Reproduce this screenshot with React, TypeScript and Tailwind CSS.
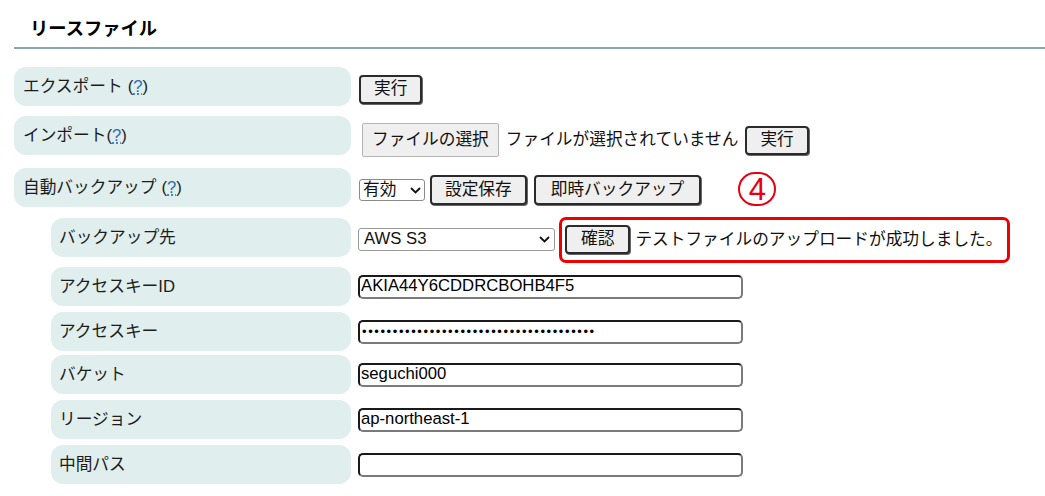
import type { ReactNode } from "react";

const font = "font-['Liberation_Sans','Noto_Sans_CJK_JP',sans-serif]";

function Help({ spaced = true }: { spaced?: boolean }) {
  return (
    <span className={spaced ? "ml-[5px]" : ""}>
      (<span className="text-[#2e6db4] underline decoration-dotted underline-offset-2">?</span>)
    </span>
  );
}

function Chevron() {
  return (
    <svg width="11" height="7" viewBox="0 0 11 7" className="shrink-0">
      <path d="M1 1 L5.5 5.5 L10 1" fill="none" stroke="#111" strokeWidth="1.8" />
    </svg>
  );
}

function Button({ children, className = "" }: { children: ReactNode; className?: string }) {
  return (
    <button
      type="button"
      className={`h-[29px] px-[13px] bg-[#efefef] border-2 border-[#2b2b2b] rounded-[4px] shadow-[1px_1px_0_#666] text-[16.7px] leading-none text-[#111] ${className}`}
    >
      {children}
    </button>
  );
}

const boxBorder =
  "w-[385px] h-[24px] flex items-center bg-white border-2 border-t-[#1a1a1a] border-l-[#1a1a1a] border-r-[#7a7a7a] border-b-[#7a7a7a] rounded-[5px] leading-none text-black overflow-hidden whitespace-nowrap";

function TextBox({ value }: { value: string }) {
  return <div className={`${boxBorder} pl-[1px] text-[16.7px]`}>{value}</div>;
}

interface RowProps {
  label: ReactNode;
  indent?: boolean;
  className: string;
  contentClass?: string;
  children: ReactNode;
}

function Row({ label, indent = false, className, contentClass = "", children }: RowProps) {
  return (
    <div className={`flex h-[39px] ${className}`}>
      <div
        className={`h-full flex items-center bg-[#e0eeee] rounded-[12px] text-[16.7px] text-[#1c1c1c] ${
          indent ? "ml-[37px] w-[300px] pl-[8px]" : "w-[337px] pl-[9px]"
        }`}
      >
        {label}
      </div>
      <div className={`ml-[7px] h-full flex items-center ${contentClass}`}>{children}</div>
    </div>
  );
}

export default function App() {
  return (
    <div className={`w-[1045px] h-[496px] bg-white overflow-hidden ${font}`}>
      <div className="ml-[14px] pl-[16px] pt-[17px] pb-[6px] border-b-2 border-[#85a8a8]">
        <h2 className="text-[18.3px] leading-[24px] font-bold text-black">リースファイル</h2>
      </div>

      <div className="ml-[14px]">
        <Row className="mt-[18px]" contentClass="pt-[5px]" label={<>エクスポート<Help /></>}>
          <Button className="ml-[1px]">実行</Button>
        </Row>

        <Row className="mt-[10px]" contentClass="pt-[9px]" label={<>インポート<Help spaced={false} /></>}>
          <div className="ml-[4px] h-[34px] px-[9px] flex items-center bg-[#efefef] border border-[#b5b5b5] rounded-[2px] text-[16.7px] text-[#111]">
            ファイルの選択
          </div>
          <span className="ml-[7px] text-[16.7px] text-[#111]">ファイルが選択されていません</span>
          <Button className="ml-[7px]">実行</Button>
        </Row>

        <Row className="mt-[13px]" contentClass="pt-[5px]" label={<>自動バックアップ<Help /></>}>
          <div className="ml-[1px] h-[22px] w-[66px] pl-[3px] pr-[3px] flex items-center justify-between bg-white border border-[#8a8a8a] rounded-[3px] text-[16.7px] leading-none text-[#111]">
            <span>有効</span>
            <Chevron />
          </div>
          <Button className="ml-[5px] h-[30px]">設定保存</Button>
          <Button className="ml-[7px] h-[30px] px-[15px]">即時バックアップ</Button>
          <span className="ml-[37px] -mt-[2px] w-[38px] h-[34px] flex items-center justify-center rounded-full border-2 border-[#e60012] text-[31px] leading-none text-[#e60012]">
            4
          </span>
        </Row>

        <Row className="mt-[11px]" indent contentClass="pt-[4px]" label="バックアップ先">
          <div className="h-[23px] w-[197px] pl-[5px] pr-[4px] flex items-center justify-between bg-white border border-[#9a9a9a] rounded-[3px] text-[16.7px] leading-none text-[#111]">
            <span>AWS S3</span>
            <Chevron />
          </div>
          <div className="ml-[4px] h-[46px] pl-[3px] pr-[4px] flex items-center border-[3px] border-[#ee0000] rounded-[7px]">
            <Button className="px-[14px]">確認</Button>
            <span className="ml-[5px] text-[16.7px] text-[#111] whitespace-nowrap">
              テストファイルのアップロードが成功しました。
            </span>
          </div>
        </Row>

        <Row className="mt-[10px]" indent label="アクセスキーID">
          <TextBox value="AKIA44Y6CDDRCBOHB4F5" />
        </Row>

        <Row className="mt-[6px]" indent label="アクセスキー">
          <div className={`${boxBorder} pl-[2px] text-[13px] tracking-[1.6px]`}>{"•".repeat(38)}</div>
        </Row>

        <Row className="mt-[4px]" indent label="バケット">
          <TextBox value="seguchi000" />
        </Row>

        <Row className="mt-[6px]" indent label="リージョン">
          <TextBox value="ap-northeast-1" />
        </Row>

        <Row className="mt-[6px]" indent label="中間パス">
          <TextBox value="" />
        </Row>
      </div>
    </div>
  );
}
